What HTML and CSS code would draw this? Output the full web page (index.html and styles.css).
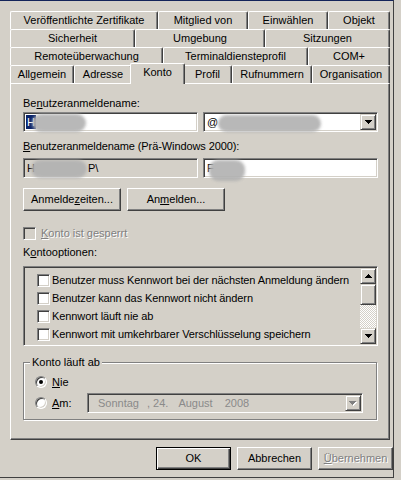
FILE: index.html
```html
<!DOCTYPE html>
<html lang="de">
<head>
<meta charset="utf-8">
<title>Eigenschaften</title>
<link rel="stylesheet" href="styles.css">
</head>
<body>
<div class="win">
  <div class="tabs">
    <div class="tabrow">
      <div class="tab w148">Veröffentlichte Zertifikate</div>
      <div class="tab w90">Mitglied von</div>
      <div class="tab w80">Einwählen</div>
      <div class="tab w62">Objekt</div>
    </div>
    <div class="tabrow">
      <div class="tab w125">Sicherheit</div>
      <div class="tab w130">Umgebung</div>
      <div class="tab w125">Sitzungen</div>
    </div>
    <div class="tabrow">
      <div class="tab w153">Remoteüberwachung</div>
      <div class="tab w145">Terminaldiensteprofil</div>
      <div class="tab w82">COM+</div>
    </div>
    <div class="tabrow">
      <div class="tab w64">Allgemein</div>
      <div class="tab w58">Adresse</div>
      <div class="tab active w55">Konto</div>
      <div class="tab w49">Profil</div>
      <div class="tab w80">Rufnummern</div>
      <div class="tab w78">Organisation</div>
    </div>
  </div>

  <div class="panel">
    <div class="label">Be<u>n</u>utzeranmeldename:</div>
    <div class="pair p1">
      <div class="field white"><span class="sel">H</span><span class="blob b1"></span></div>
      <div class="field white combo"><span class="ftext">@</span><span class="blob b2"></span>
        <span class="ddbtn"><svg width="7" height="4" viewBox="0 0 7 4"><path d="M0 0h7v1h-1v1h-1v1h-1v1h-1v-1h-1v-1h-1v-1h-1z" fill="#000"/></svg></span>
      </div>
    </div>

    <div class="label l2"><u>B</u>enutzeranmeldename (Prä-Windows 2000):</div>
    <div class="pair p2">
      <div class="field gray"><span class="ftext">H</span><span class="blob b3"></span><span class="ftext tail">P\</span></div>
      <div class="field white"><span class="ftext">F</span><span class="blob b4"></span></div>
    </div>

    <div class="btnrow">
      <div class="btn w98">Anmelde<u>z</u>eiten...</div>
      <div class="btn w98">An<u>m</u>elden...</div>
    </div>

    <div class="chkrow">
      <span class="chk disabled"></span>
      <span class="dis"><u>K</u>onto ist gesperrt</span>
    </div>

    <div class="label l3">K<u>o</u>ntooptionen:</div>
    <div class="list">
      <div class="items">
        <div class="item"><span class="chk"></span><span>Benutzer muss Kennwort bei der nächsten Anmeldung ändern</span></div>
        <div class="item"><span class="chk"></span><span>Benutzer kann das Kennwort nicht ändern</span></div>
        <div class="item"><span class="chk"></span><span>Kennwort läuft nie ab</span></div>
        <div class="item"><span class="chk"></span><span>Kennwort mit umkehrbarer Verschlüsselung speichern</span></div>
      </div>
      <div class="sbar">
        <div class="sbtn"><svg width="7" height="4" viewBox="0 0 7 4"><path d="M3 0h1v1h1v1h1v1h1v1h-7v-1h1v-1h1v-1h1z" fill="#000"/></svg></div>
        <div class="thumb"></div>
        <div class="track"></div>
        <div class="sbtn"><svg width="7" height="4" viewBox="0 0 7 4"><path d="M0 0h7v1h-1v1h-1v1h-1v1h-1v-1h-1v-1h-1v-1h-1z" fill="#000"/></svg></div>
      </div>
    </div>

    <div class="group">
      <div class="legend">Konto läuft ab</div>
      <div class="rrow r1">
        <span class="radio on"></span>
        <span class="rlabel"><u>N</u>ie</span>
      </div>
      <div class="rrow r2">
        <span class="radio"></span>
        <span class="rlabel amlabel"><u>A</u>m:</span>
        <div class="date">
          <span class="d1">Sonntag</span><span class="d2">, 24.</span><span class="d3">August</span><span class="d4">2008</span>
          <span class="ddbtn dbtn"><svg width="8" height="5" viewBox="0 0 8 5"><path d="M1 1h7v1h-1v1h-1v1h-1v1h-1v-1h-1v-1h-1v-1h-1z" fill="#fff"/><path d="M0 0h7v1h-1v1h-1v1h-1v1h-1v-1h-1v-1h-1v-1h-1z" fill="#808080"/></svg></span>
        </div>
      </div>
    </div>
  </div>

  <div class="foot">
    <div class="btn def">OK</div>
    <div class="btn">Abbrechen</div>
    <div class="btn dis"><u>Ü</u>bernehmen</div>
  </div>
</div>
</body>
</html>
```

FILE: styles.css
```css
* { box-sizing: border-box; }
html, body { margin: 0; padding: 0; }
body {
  width: 401px;
  height: 480px;
  overflow: hidden;
  background: #d4d0c8;
  font-family: "Liberation Sans", Arial, sans-serif;
  font-size: 11px;
  color: #000;
}
u { text-decoration: underline; text-underline-offset: 1px; }

.win {
  width: 394px;
  height: 478px;
  border-top: 1px solid #14245a;
  border-right: 1px solid #404040;
  border-bottom: 1px solid #404040;
  padding: 10px 0 0 10px;
}

/* tabs */
.tabs { width: 380px; }
.tabrow { display: flex; height: 18px; }
.tab {
  height: 18px;
  flex: none;
  border-top: 1px solid #fff;
  border-left: 1px solid #fff;
  border-right: 1px solid #404040;
  box-shadow: inset -1px 0 #808080;
  border-radius: 2px 2px 0 0;
  text-align: center;
  line-height: 16px;
  white-space: nowrap;
  background: #d4d0c8;
}
.tab.active {
  position: relative;
  z-index: 2;
  height: 21px;
  margin: -2px -2px -1px;
  line-height: 16px;
}
.w148 { width: 148px; }
.w90 { width: 90px; }
.w80 { width: 80px; }
.w62 { width: 62px; }
.w125 { width: 125px; }
.w130 { width: 130px; }
.w153 { width: 153px; }
.w145 { width: 145px; }
.w82 { width: 82px; }
.w64 { width: 64px; }
.w58 { width: 58px; }
.w55 { width: 55px; }
.w49 { width: 49px; }
.w78 { width: 78px; }
.w98 { width: 98px; }

/* panel */
.panel {
  width: 380px;
  height: 357px;
  border: 1px solid;
  border-color: #fff #404040 #404040 #fff;
  box-shadow: inset -1px -1px #808080;
  padding: 13px 11px 0 12px;
}
.label { line-height: 13px; white-space: nowrap; }
.l2 { margin-top: 8px; letter-spacing: -0.1px; }
.l3 { margin-top: 6px; }

.pair {
  display: grid;
  grid-template-columns: 175px 175px;
  column-gap: 5px;
}
.p1 { margin-top: 2px; }
.p2 { margin-top: 5px; }

.field {
  position: relative;
  height: 20px;
  border: 1px solid;
  border-color: #808080 #fff #fff #808080;
  box-shadow: inset 1px 1px #404040, inset -1px -1px #d4d0c8;
  padding: 2px 2px 0 2px;
  line-height: 14px;
  white-space: nowrap;
  display: flex;
  align-items: flex-start;
}
.white { background: #fff; }
.gray { background: #d4d0c8; }
.sel {
  background: #0a246a;
  color: #fff;
  padding: 0 1px;
  line-height: 14px;
}
.ftext { padding-left: 1px; }
.tail { margin-left: 52px; }

.blob {
  position: absolute;
  background: #b2b2b2;
  border-radius: 9px;
  filter: blur(1.6px);
  opacity: 0.92;
}
.b1 { left: 8px; top: 1px; width: 54px; height: 18px; }
.b2 { left: 14px; top: 2px; width: 103px; height: 17px; }
.b3 { left: 7px; top: 1px; width: 56px; height: 18px; }
.b4 { left: 5px; top: 1px; width: 36px; height: 21px; }

.ddbtn {
  position: absolute;
  right: 1px;
  top: 1px;
  width: 16px;
  height: 16px;
  background: #d4d0c8;
  border: 1px solid;
  border-color: #d4d0c8 #404040 #404040 #d4d0c8;
  box-shadow: inset 1px 1px #fff, inset -1px -1px #808080;
  display: flex;
  align-items: center;
  justify-content: center;
}
.ddbtn svg { display: block; }

/* buttons */
.btnrow { display: flex; gap: 6px; margin-top: 10px; }
.btn {
  height: 23px;
  width: 75px;
  border: 1px solid;
  border-color: #fff #404040 #404040 #fff;
  box-shadow: inset -1px -1px #808080;
  background: #d4d0c8;
  text-align: center;
  line-height: 20px;
  white-space: nowrap;
}
.btnrow .btn { width: 98px; }
.btn.def {
  border-color: #000;
  box-shadow: inset 1px 1px #fff, inset -1px -1px #404040, inset -2px -2px #808080;
}
.dis { color: #808080; text-shadow: 1px 1px 0 #fff; }

/* checkbox */
.chkrow {
  display: flex;
  align-items: center;
  gap: 5px;
  margin-top: 16px;
  height: 13px;
  line-height: 13px;
}
.chk {
  flex: none;
  width: 13px;
  height: 13px;
  border: 1px solid;
  border-color: #808080 #fff #fff #808080;
  box-shadow: inset 1px 1px #404040, inset -1px -1px #d4d0c8;
  background: #fff;
}
.chk.disabled { background: #d4d0c8; }

/* list */
.list {
  margin-top: 7px;
  height: 80px;
  border: 1px solid;
  border-color: #808080 #fff #fff #808080;
  box-shadow: inset 1px 1px #404040, inset -1px -1px #d4d0c8;
  padding: 1px;
  display: flex;
}
.items { flex: 1; padding: 3px 0 0 12px; overflow: hidden; }
.item {
  height: 18px;
  display: flex;
  align-items: center;
  gap: 2px;
  white-space: nowrap;
  letter-spacing: -0.1px;
}
.sbar { width: 16px; display: flex; flex-direction: column; }
.sbtn, .thumb {
  background: #d4d0c8;
  border: 1px solid;
  border-color: #d4d0c8 #404040 #404040 #d4d0c8;
  box-shadow: inset 1px 1px #fff, inset -1px -1px #808080;
}
.sbtn {
  height: 16px;
  display: flex;
  align-items: center;
  justify-content: center;
}
.sbtn svg { display: block; }
.thumb { height: 21px; }
.track {
  flex: 1;
  background-color: #fff;
  background-image: repeating-conic-gradient(#d4d0c8 0 25%, #fff 0 50%);
  background-size: 2px 2px;
}

/* group */
.group {
  margin-top: 16px;
  width: 354px;
  height: 58px;
  border: 1px solid #808080;
  box-shadow: inset 1px 1px #fff, 1px 1px #fff;
  padding-left: 11px;
}
.legend {
  width: max-content;
  margin: -7px 0 0 -5px;
  padding: 0 2px;
  background: #d4d0c8;
  line-height: 13px;
}
.rrow { display: flex; align-items: center; }
.r1 { margin-top: 5px; height: 16px; }
.r2 { margin-top: 3px; height: 20px; }
.radio {
  flex: none;
  width: 12px;
  height: 12px;
  border-radius: 50%;
  border: 1px solid;
  border-color: #808080 #fff #fff #808080;
  box-shadow: inset 1px 1px #404040, inset -1px -1px #d4d0c8;
  background: #fff;
  display: flex;
  align-items: center;
  justify-content: center;
}
.radio.on::after {
  content: "";
  width: 4px;
  height: 4px;
  border-radius: 50%;
  background: #000;
}
.rlabel { margin-left: 5px; line-height: 13px; }
.amlabel { width: 35px; }
.date {
  position: relative;
  width: 276px;
  height: 20px;
  border: 1px solid;
  border-color: #808080 #fff #fff #808080;
  box-shadow: inset 1px 1px #404040, inset -1px -1px #d4d0c8;
  background: #d4d0c8;
  color: #8a8a8a;
  padding: 0 0 0 10px;
  line-height: 18px;
  white-space: nowrap;
  display: flex;
}
.d2 { margin-left: 8px; }
.d3 { margin-left: 10px; }
.d4 { margin-left: 12px; }
.dbtn { top: 1px; right: 1px; }

/* footer */
.foot {
  display: flex;
  justify-content: flex-end;
  gap: 6px;
  width: 383px;
  margin-top: 7px;
}
```
